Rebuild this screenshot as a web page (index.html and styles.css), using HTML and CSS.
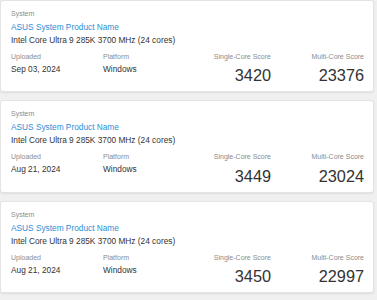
FILE: index.html
```html
<!DOCTYPE html>
<html lang="en">
<head>
    <meta charset="UTF-8">
    <meta name="viewport" content="width=device-width, initial-scale=1.0">
    <title>Geekbench Results</title>
    <link rel="stylesheet" href="styles.css">
</head>
<body>
    <div class="results">
        <div class="result">
            <div class="label">System</div>
            <a class="name" href="#">ASUS System Product Name</a>
            <div class="cpu">Intel Core Ultra 9 285K 3700 MHz (24 cores)</div>
            <div class="stats">
                <div class="stat">
                    <div class="label">Uploaded</div>
                    <div class="value">Sep 03, 2024</div>
                </div>
                <div class="stat">
                    <div class="label">Platform</div>
                    <div class="value">Windows</div>
                </div>
                <div class="stat score-col">
                    <div class="label">Single-Core Score</div>
                    <div class="score">3420</div>
                </div>
                <div class="stat score-col">
                    <div class="label">Multi-Core Score</div>
                    <div class="score">23376</div>
                </div>
            </div>
        </div>

        <div class="result">
            <div class="label">System</div>
            <a class="name" href="#">ASUS System Product Name</a>
            <div class="cpu">Intel Core Ultra 9 285K 3700 MHz (24 cores)</div>
            <div class="stats">
                <div class="stat">
                    <div class="label">Uploaded</div>
                    <div class="value">Aug 21, 2024</div>
                </div>
                <div class="stat">
                    <div class="label">Platform</div>
                    <div class="value">Windows</div>
                </div>
                <div class="stat score-col">
                    <div class="label">Single-Core Score</div>
                    <div class="score">3449</div>
                </div>
                <div class="stat score-col">
                    <div class="label">Multi-Core Score</div>
                    <div class="score">23024</div>
                </div>
            </div>
        </div>

        <div class="result">
            <div class="label">System</div>
            <a class="name" href="#">ASUS System Product Name</a>
            <div class="cpu">Intel Core Ultra 9 285K 3700 MHz (24 cores)</div>
            <div class="stats">
                <div class="stat">
                    <div class="label">Uploaded</div>
                    <div class="value">Aug 21, 2024</div>
                </div>
                <div class="stat">
                    <div class="label">Platform</div>
                    <div class="value">Windows</div>
                </div>
                <div class="stat score-col">
                    <div class="label">Single-Core Score</div>
                    <div class="score">3450</div>
                </div>
                <div class="stat score-col">
                    <div class="label">Multi-Core Score</div>
                    <div class="score">22997</div>
                </div>
            </div>
        </div>
    </div>
</body>
</html>
```

FILE: styles.css
```css
body {
    font-family: "Liberation Sans", Arial, sans-serif;
    margin: 0;
    padding: 0;
    background-color: #f0f0f0;
    color: #333;
}
.results {
    padding: 0 3px 0 0;
}
.result {
    background-color: #fff;
    border: 1px solid #e3e3e3;
    border-radius: 3px;
    box-shadow: 0 1px 2px rgba(0,0,0,0.08);
    padding: 8px 9px 6px 10px;
    margin-bottom: 8px;
}
.label {
    font-size: 7px;
    line-height: 10px;
    color: #8c8c8c;
}
.name {
    display: block;
    font-size: 8.3px;
    line-height: 12px;
    margin-top: 2px;
    color: #2b8fd6;
    text-decoration: none;
}
.cpu {
    font-size: 8.3px;
    line-height: 13px;
    margin-top: 1px;
}
.stats {
    display: grid;
    grid-template-columns: 92px 1fr 90px 93px;
    margin-top: 4.9px;
}
.value {
    font-size: 8.3px;
    line-height: 12px;
    margin-top: 0.8px;
}
.score-col {
    text-align: right;
}
.score {
    font-size: 16.3px;
    line-height: 20px;
    margin-top: 3.6px;
}
```
